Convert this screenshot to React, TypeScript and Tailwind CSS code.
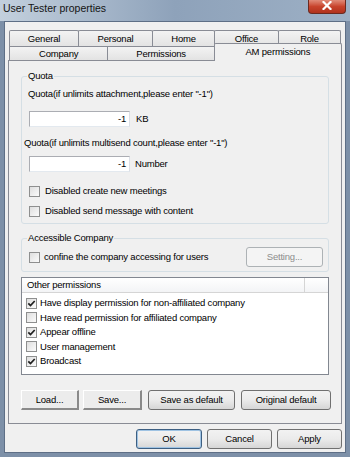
import React from "react";

function Box({ checked }: { checked?: boolean }) {
  return (
    <span className="w-[11px] h-[11px] shrink-0 border border-[#8e8f8f] bg-gradient-to-br from-[#dedede] to-[#fbfbfb] flex items-center justify-center">
      {checked && (
        <svg width="9" height="9" viewBox="0 0 9 9">
          <path d="M1.3 4.4 L3.5 6.6 L7.7 2" fill="none" stroke="#1f1f1f" strokeWidth="1.7" />
        </svg>
      )}
    </span>
  );
}

function Tab({ label, w, selected }: { label: string; w: string; selected?: boolean }) {
  return (
    <div
      className={
        selected
          ? `${w} h-[18px] -mb-[1px] -ml-[1px] relative z-10 flex items-center justify-center border border-b-0 border-[#898c95] rounded-t-[2px] bg-[#f0f0f0] pb-[2px]`
          : `${w} -ml-[1px] first:ml-0 flex items-center justify-center border border-b-0 border-[#898c95] rounded-t-[2px] bg-gradient-to-b from-[#f3f3f3] to-[#e3e3e3]`
      }
    >
      {label}
    </div>
  );
}

function Win7Button({ label, w }: { label: string; w: string }) {
  return (
    <div className={`${w} h-[20px] flex items-center justify-center border border-[#707070] rounded-[3px] bg-gradient-to-b from-[#f2f2f2] via-[#ebebeb] to-[#d6d6d6]`}>
      {label}
    </div>
  );
}

function FlatButton({ label, w }: { label: string; w: string }) {
  return (
    <div className={`${w} h-[20px] flex items-center justify-center bg-[#ececec] border-t border-l border-t-white border-l-white border-r-2 border-b-2 border-r-[#8a8a8a] border-b-[#8a8a8a]`}>
      {label}
    </div>
  );
}

const perms: [string, boolean][] = [
  ["Have display permission for non-affiliated company", true],
  ["Have read permission for affiliated company", false],
  ["Appear offline", true],
  ["User management", false],
  ["Broadcast", true],
];

export default function App() {
  return (
    <div className="w-[350px] h-[457px] bg-[#7d90a8] flex flex-col overflow-hidden font-['Liberation_Sans',Arial,sans-serif] text-[9.5px] leading-[12px] tracking-[-0.2px] text-black">
      {/* title bar */}
      <div className="h-[21px] shrink-0 flex items-start justify-between bg-gradient-to-r from-[#c3d0dd] via-[#8ea2ba] to-[#9db0c5]">
        <div className="pl-[3px] pt-[2px] text-[10.5px] leading-[13px] tracking-normal text-[#141414]">
          User Tester properties
        </div>
        <div className="mr-[4px] w-[38px] h-[14px] rounded-b-[4px] border border-t-0 border-[#6b2a20] bg-gradient-to-b from-[#e08a78] via-[#c8432c] to-[#b0321c] flex items-start justify-center">
          <svg width="10" height="9" viewBox="0 0 10 9" className="mt-[1px]">
            <path d="M1.5 1 L8.5 8 M8.5 1 L1.5 8" stroke="white" strokeWidth="2.2" strokeLinecap="square" />
          </svg>
        </div>
      </div>

      {/* client */}
      <div className="flex-1 mx-[4px] mb-[4px] bg-[#f0f0f0] border border-[#5e6f86] flex flex-col">
        <div className="ml-[3px] w-[334px] pt-[8px] flex flex-col">
          {/* tab rows */}
          <div className="ml-[1px] h-[16px] flex">
            <Tab label="General" w="w-[70px]" />
            <Tab label="Personal" w="w-[75px]" />
            <Tab label="Home" w="w-[63px]" />
            <Tab label="Office" w="w-[65px]" />
            <Tab label="Role" w="w-[63px]" />
          </div>
          <div className="ml-[1px] h-[14px] flex items-end">
            <div className="w-[100px] h-[14px] flex items-center justify-center border border-b-0 border-[#898c95] bg-gradient-to-b from-[#f3f3f3] to-[#e3e3e3]">
              Company
            </div>
            <div className="w-[108px] h-[14px] -ml-[1px] flex items-center justify-center border border-b-0 border-[#898c95] bg-gradient-to-b from-[#f3f3f3] to-[#e3e3e3]">
              Permissions
            </div>
            <Tab label="AM permissions" w="w-[129px]" selected />
          </div>

          {/* panel */}
          <div className="h-[364px] border border-[#898c95] bg-[#f0f0f0] pl-[12px] flex flex-col">
            <fieldset className="mt-[9px] w-[308px] h-[154px] border border-[#d5dfe5] rounded-[3px] flex flex-col">
              <legend className="ml-[5px] px-[1px]">Quota</legend>
              <div className="mt-[6px] ml-[6px]">Quota(if unlimits attachment,please enter "-1")</div>
              <div className="mt-[11px] ml-[7px] flex items-center">
                <div className="w-[101px] h-[16px] border border-[#abadb3] border-b-[#e3e9ef] border-r-[#dbdfe6] bg-white flex items-center justify-end pr-[3px]">
                  -1
                </div>
                <span className="ml-[6px]">KB</span>
              </div>
              <div className="mt-[10px] ml-[2px]">Quota(if unlimits multisend count,please enter "-1")</div>
              <div className="mt-[7px] ml-[7px] flex items-center">
                <div className="w-[101px] h-[16px] border border-[#abadb3] border-b-[#e3e9ef] border-r-[#dbdfe6] bg-white flex items-center justify-end pr-[3px]">
                  -1
                </div>
                <span className="ml-[5px]">Number</span>
              </div>
              <div className="mt-[13px] ml-[7px] flex items-center gap-[5px]">
                <Box />
                <span>Disabled create new meetings</span>
              </div>
              <div className="mt-[8px] ml-[7px] flex items-center gap-[5px]">
                <Box />
                <span>Disabled send message with content</span>
              </div>
            </fieldset>

            <fieldset className="mt-[8px] w-[308px] border border-[#d5dfe5] rounded-[3px] pb-[4px] flex flex-col">
              <legend className="ml-[5px] px-[1px]">Accessible Company</legend>
              <div className="mt-[3px] ml-[7px] mr-[5px] h-[20px] flex items-center justify-between">
                <div className="flex items-center gap-[4px]">
                  <Box />
                  <span>confine the company accessing for users</span>
                </div>
                <div className="w-[77px] h-[20px] flex items-center justify-center border border-[#adb2b5] rounded-[3px] bg-[#f4f4f4] text-[#8d8d8d]">
                  Setting...
                </div>
              </div>
            </fieldset>

            <div className="mt-[5px] w-[308px] h-[98px] border border-[#828790] bg-white flex flex-col">
              <div className="h-[15px] flex border-b border-[#d5d5d5] bg-gradient-to-b from-white to-[#f3f4f6]">
                <div className="w-[283px] pl-[5px] flex items-center border-r border-[#d5d5d5]">Other permissions</div>
                <div className="flex-1" />
              </div>
              <div className="mt-[3px] flex flex-col">
                {perms.map(([t, c]) => (
                  <div key={t} className="h-[14.5px] pl-[4px] flex items-center gap-[3px]">
                    <Box checked={c} />
                    <span>{t}</span>
                  </div>
                ))}
              </div>
            </div>

            <div className="mt-[15px] flex items-center">
              <FlatButton label="Load..." w="w-[58px]" />
              <div className="ml-[4px]">
                <FlatButton label="Save..." w="w-[59px]" />
              </div>
              <div className="ml-[6px]">
                <Win7Button label="Save as default" w="w-[87px]" />
              </div>
              <div className="ml-[6px]">
                <Win7Button label="Original default" w="w-[90px]" />
              </div>
            </div>
          </div>

          {/* dialog buttons */}
          <div className="mt-[5px] flex justify-end gap-[5px]">
            <div className="w-[66px] h-[20px] flex items-center justify-center border border-[#3d5f82] rounded-[3px] bg-gradient-to-b from-[#f2f2f2] via-[#ebebeb] to-[#d6d6d6] shadow-[inset_0_0_0_1px_#9fc3e3]">
              OK
            </div>
            <Win7Button label="Cancel" w="w-[65px]" />
            <Win7Button label="Apply" w="w-[65px]" />
          </div>
        </div>
      </div>
    </div>
  );
}
